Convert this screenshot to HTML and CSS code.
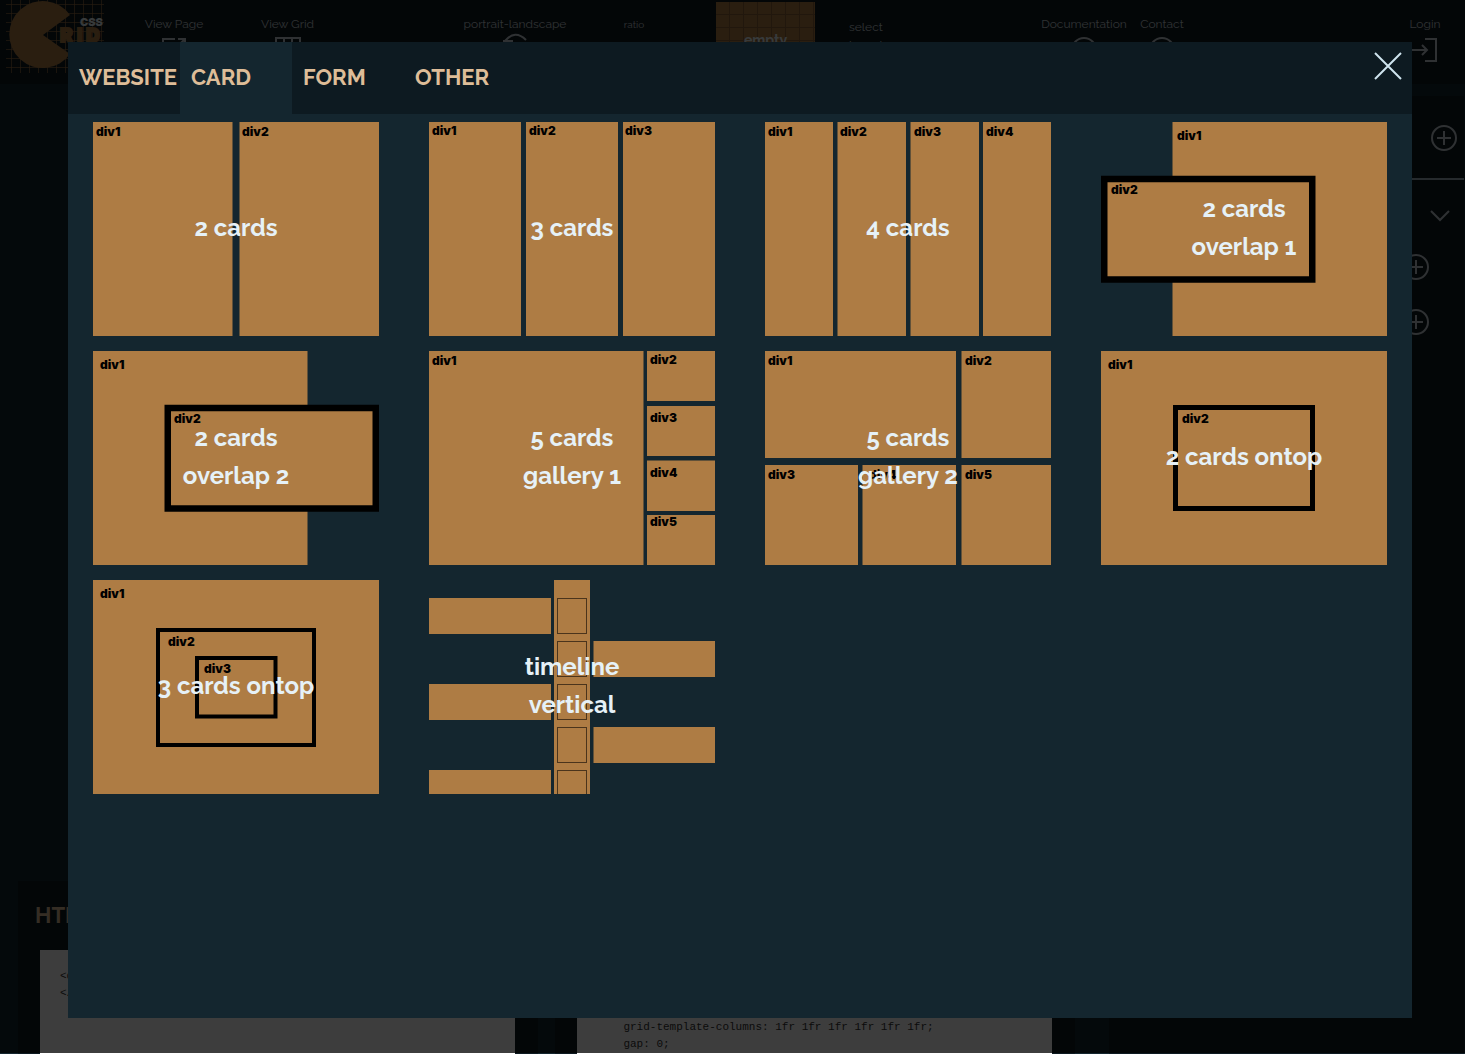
FILE: index.html
```html
<!DOCTYPE html>
<html lang="en">
<head>
<meta charset="utf-8">
<title>CSS Grid</title>
<link rel="stylesheet" href="styles.css">
</head>
<body>
<header class="topbar">
  <a class="logo" href="#" aria-label="CSS Grid home">
    <svg width="98" height="73" viewBox="0 0 98 73">
      <path class="logo-lines" d="M0 4.500H98M0 13.500H98M0 22.500H98M0 31.500H98M0 40.500H98M0 49.500H98M0 58.500H98M0 67.500H98M5.500 0V73M14.500 0V73M23.500 0V73M32.500 0V73M41.500 0V73M50.500 0V73M59.500 0V73M68.500 0V73M77.500 0V73M86.500 0V73M95.500 0V73"/>
      <path class="logo-pac" d="M37 35 64 15A33.500 33.500 0 1 0 64 54Z"/>
      <text class="logo-css" x="74" y="26">CSS</text>
      <text class="logo-rid" x="54 71 80" y="42">RID</text>
    </svg>
  </a>
  <a class="tool" href="#"><span>View Page</span>
    <svg width="28" height="28" viewBox="0 0 28 28"><path d="M15 4H3V26H25V14M14 15 25 4M18 4H25V11"/></svg></a>
  <a class="tool" href="#"><span>View Grid</span>
    <svg width="28" height="28" viewBox="0 0 28 28"><path d="M2 3H26V26H2ZM10 3V26M18 3V26M2 11H26M2 18H26"/></svg></a>
  <button class="tool tool-rotate" type="button"><span>portrait-landscape</span>
    <svg width="28" height="28" viewBox="0 0 28 28"><path d="M4 6Q14 -6 25 5M2 6H12"/></svg></button>
  <div class="tool tool-small"><span>ratio</span></div>
  <div class="swatch-cell"><button class="swatch" type="button">empty</button></div>
  <div class="select-note">select<br>layout</div>
  <a class="tool tool-docs" href="#"><span>Documentation</span>
    <svg width="28" height="28" viewBox="0 0 28 28"><circle cx="14" cy="15" r="12"/></svg></a>
  <a class="tool" href="#"><span>Contact</span>
    <svg width="28" height="28" viewBox="0 0 28 28"><circle cx="14" cy="15" r="12"/></svg></a>
  <a class="tool tool-login" href="#"><span>Login</span>
    <svg width="28" height="28" viewBox="0 0 28 28"><path d="M14 4H25V26H14M1 15H16M11 10 16 15 11 20"/></svg></a>
</header>

<div class="workspace">
  <main class="editor">
    <div class="canvas"></div>
    <div class="panels">
      <section class="panel">
        <h2>HTML</h2>
        <pre class="code">&lt;div&gt;
&lt;/div&gt;</pre>
      </section>
      <section class="panel">
        <h2>CSS</h2>
        <pre class="code">.container {
    display: grid;
    grid-template-rows: 1fr;
    grid-template-columns: 1fr 1fr 1fr 1fr 1fr 1fr;
    gap: 0;
}</pre>
      </section>
    </div>
  </main>
  <aside class="side">
    <div class="side-head"><button type="button" aria-label="Add item"><svg width="28" height="28" viewBox="0 0 28 28"><path d="M14 7V21M7 14H21"/><circle cx="14" cy="14" r="12"/></svg></button></div>
    <div class="side-toggle"><button type="button" aria-label="Expand"><svg width="28" height="28" viewBox="0 0 28 28"><path d="M5 9 14 18 23 9"/></svg></button></div>
    <div class="side-row"><button type="button" aria-label="Add column"><svg width="28" height="28" viewBox="0 0 28 28"><path d="M14 7V21M7 14H21"/><circle cx="14" cy="14" r="12"/></svg></button></div>
    <div class="side-row"><button type="button" aria-label="Add row"><svg width="28" height="28" viewBox="0 0 28 28"><path d="M14 7V21M7 14H21"/><circle cx="14" cy="14" r="12"/></svg></button></div>
  </aside>
</div>

<div class="overlay">
  <section class="modal" role="dialog" aria-label="Layouts">
    <nav class="tabs">
      <button class="tab" type="button">WEBSITE</button>
      <button class="tab tab-active" type="button">CARD</button>
      <button class="tab" type="button">FORM</button>
      <button class="tab" type="button">OTHER</button>
      <button class="close" type="button" aria-label="Close"><svg width="28" height="28" viewBox="0 0 28 28"><path d="M1 1 27 27M27 1 1 27"/></svg></button>
    </nav>
    <div class="layouts">
      <button class="layout" type="button">
        <svg viewBox="0 0 286 214"><rect width="139.500" height="214"/><rect x="146.500" width="139.500" height="214"/>
          <text x="3" y="14">div1</text><text x="149" y="14">div2</text></svg>
        <span>2 cards</span></button>
      <button class="layout" type="button">
        <svg viewBox="0 0 286 214"><rect width="92" height="214"/><rect x="97" width="92" height="214"/><rect x="194" width="92" height="214"/>
          <text x="3" y="13">div1</text><text x="100" y="13">div2</text><text x="196" y="13">div3</text></svg>
        <span>3 cards</span></button>
      <button class="layout" type="button">
        <svg viewBox="0 0 286 214"><rect width="68" height="214"/><rect x="72.500" width="68.500" height="214"/><rect x="145.500" width="68.500" height="214"/><rect x="218" width="68" height="214"/>
          <text x="3" y="14">div1</text><text x="75" y="14">div2</text><text x="149" y="14">div3</text><text x="221" y="14">div4</text></svg>
        <span>4 cards</span></button>
      <button class="layout" type="button">
        <svg viewBox="0 0 286 214"><rect x="71.500" width="214.500" height="214"/><rect class="edge" stroke-width="6.500" x="3.250" y="57" width="208" height="100.500"/>
          <text x="76" y="18">div1</text><text x="10" y="72">div2</text></svg>
        <span>2 cards<br>overlap 1</span></button>
      <button class="layout" type="button">
        <svg viewBox="0 0 286 214"><rect width="214.500" height="214"/><rect class="edge" stroke-width="6.500" x="74.750" y="57" width="208" height="100.500"/>
          <text x="7" y="18">div1</text><text x="81" y="72">div2</text></svg>
        <span>2 cards<br>overlap 2</span></button>
      <button class="layout" type="button">
        <svg viewBox="0 0 286 214"><rect width="214.500" height="214"/><rect x="218" width="68" height="50"/><rect x="218" y="55" width="68" height="50"/><rect x="218" y="109.500" width="68" height="50.500"/><rect x="218" y="164" width="68" height="50"/>
          <text x="3" y="14">div1</text><text x="221" y="13">div2</text><text x="221" y="71">div3</text><text x="221" y="126">div4</text><text x="221" y="175">div5</text></svg>
        <span>5 cards<br>gallery 1</span></button>
      <button class="layout" type="button">
        <svg viewBox="0 0 286 214"><rect width="191" height="107"/><rect x="196.500" width="89.500" height="107"/><rect y="114" width="93" height="100"/><rect x="97.500" y="114" width="93.500" height="100"/><rect x="196.500" y="114" width="89.500" height="100"/>
          <text x="3" y="14">div1</text><text x="200" y="14">div2</text><text x="3" y="128">div3</text><text x="104" y="128">div4</text><text x="200" y="128">div5</text></svg>
        <span>5 cards<br>gallery 2</span></button>
      <button class="layout" type="button">
        <svg viewBox="0 0 286 214"><rect width="286" height="214"/><rect class="edge" stroke-width="5" x="74.500" y="56.500" width="137" height="101"/>
          <text x="7" y="18">div1</text><text x="81" y="72">div2</text></svg>
        <span>2 cards ontop</span></button>
      <button class="layout" type="button">
        <svg viewBox="0 0 286 214"><rect width="286" height="214"/><rect class="edge" stroke-width="4" x="65" y="50" width="156" height="115"/><rect class="edge" stroke-width="4" x="104" y="78" width="78.500" height="58.500"/>
          <text x="7" y="18">div1</text><text x="75" y="66">div2</text><text x="111" y="93">div3</text></svg>
        <span>3 cards ontop</span></button>
      <button class="layout" type="button">
        <svg viewBox="0 0 286 214"><rect x="125" width="36" height="214"/><rect y="18" width="122" height="36"/><rect y="104" width="122" height="36"/><rect y="190" width="122" height="36"/><rect x="164.500" y="61" width="121.500" height="36"/><rect x="164.500" y="147" width="121.500" height="36"/>
          <g class="dots"><rect x="128.500" y="18.500" width="29" height="35"/><rect x="128.500" y="61.500" width="29" height="35"/><rect x="128.500" y="104.500" width="29" height="35"/><rect x="128.500" y="147.500" width="29" height="35"/><rect x="128.500" y="190.500" width="29" height="35"/></g></svg>
        <span>timeline<br>vertical</span></button>
    </div>
  </section>
</div>
</body>
</html>
```
FILE: styles.css
```css
:root {
  --ink: #0d1a21;
  --navy: #14262f;
  --copper: #ae7c44;
  --peach: #debd98;
  --ice: #e6f1f7;
  --sans: Raleway, Lato, "Open Sans", sans-serif;
}

* { box-sizing: border-box; }

body {
  margin: 0;
  height: 100vh;
  overflow: hidden;
  background: var(--navy);
  color: var(--ice);
  font-family: var(--sans);
}

button {
  margin: 0;
  padding: 0;
  border: 0;
  background: none;
  color: inherit;
  font: inherit;
  cursor: pointer;
}

a { color: inherit; text-decoration: none; }

svg { display: block; fill: none; stroke: currentColor; stroke-width: 2; }

/* Top bar */
.topbar {
  display: grid;
  grid-template-columns: 117px 114px 113px 97px 148px 90px 137px 100px 119px 98px 58px 1fr 50px;
  height: 84px;
  padding-right: 15px;
  background: var(--ink);
}

.logo { padding-left: 6px; }
.logo-lines { stroke: var(--copper); stroke-width: 1; opacity: .6; }
.logo-pac { fill: var(--copper); stroke: none; }
.logo-css { fill: var(--ice); stroke: none; font: 900 11px Inter, sans-serif; }
.logo-rid { fill: var(--copper); stroke: var(--copper); stroke-width: 2; font: 900 19px Inter, sans-serif; }

.tool {
  display: flex;
  flex-direction: column;
  align-items: center;
  gap: 3px;
  padding-top: 16px;
  font-size: 12px;
  line-height: 16px;
  color: #c4cdd3;
}
.tool svg { overflow: visible; }
.tool-rotate { grid-column: 5; }
.tool-docs { grid-column: 10; }
.tool-login { grid-column: 13; }
.tool-small { font-size: 10px; line-height: 18px; }

.swatch-cell { display: flex; justify-content: flex-end; padding: 2px 1px 6px 0; }
.swatch {
  width: 99px;
  background:
    repeating-linear-gradient(90deg, transparent 0 13px, #8a6236 13px 14px),
    repeating-linear-gradient(transparent 0 12px, #8a6236 12px 13px),
    var(--copper);
  font-size: 14px;
  font-weight: 700;
}
.select-note { padding: 18px 0 0 33px; font-size: 12px; line-height: 18px; color: #c4cdd3; }

/* Workspace behind the dialog */
.workspace { display: flex; gap: 34px; padding: 12px 1px 0 18px; }
.editor { flex: 1; }
.canvas { height: 785px; }
.panels { display: grid; grid-template-columns: 1fr 1fr; gap: 17px; }
.panel { min-width: 0; padding: 16px 23px 22px 22px; background: var(--ink); }
.panel h2 { margin: 0 0 17px -5px; font-size: 22px; line-height: 36px; color: var(--peach); }
.code {
  min-height: 300px;
  margin: 0;
  padding: 18px 20px;
  overflow: hidden;
  background: #fff;
  color: #333;
  font: 11px/17px "Liberation Mono", monospace;
}

.side { width: 355px; background: var(--ink); color: #c4cdd3; }
.side > div { display: flex; justify-content: flex-end; align-items: center; }
.side-head { height: 84px; padding: 2px 6px 0 0; border-bottom: 2px solid #9eb0ba; }
.side-toggle { height: 59px; padding: 12px 10px 0 0; }
.side-row { height: 55px; padding-right: 34px; }

/* Layout picker */
.overlay {
  position: fixed;
  inset: 0 0 1px;
  display: flex;
  padding: 42px 53px 35px 68px;
  background: rgba(0, 0, 0, .76);
}
.modal { flex: 1; overflow: auto; background: var(--navy); }

.tabs { display: flex; height: 72px; background: var(--ink); }
.tab {
  flex: 0 0 calc(100% / 12);
  min-width: 0;
  padding: 0 0 2px 11px;
  color: var(--peach);
  font-size: 22px;
  font-weight: 700;
  text-align: left;
  white-space: nowrap;
}
.tab-active { background: var(--navy); }
.close { align-self: flex-start; margin: 10px 10px 0 auto; color: #cfe4ee; }

.layouts {
  display: grid;
  grid-template-columns: repeat(4, 1fr);
  gap: 15px 50px;
  padding: 8px 25px;
}
.layout { display: grid; place-items: center; }
.layout > * { grid-area: 1 / 1; }
.layout svg { width: 100%; stroke: none; }
.layout rect { fill: var(--copper); }
.layout .edge { stroke: #000; }
.layout .dots rect { stroke: #4a341c; stroke-width: 1; }
.layout text { fill: #000; font: 900 12px Inter, sans-serif; }
.layout span {
  position: relative;
  padding-bottom: 2px;
  color: var(--ice);
  font-size: 24px;
  font-weight: 700;
  line-height: 38px;
}
```
